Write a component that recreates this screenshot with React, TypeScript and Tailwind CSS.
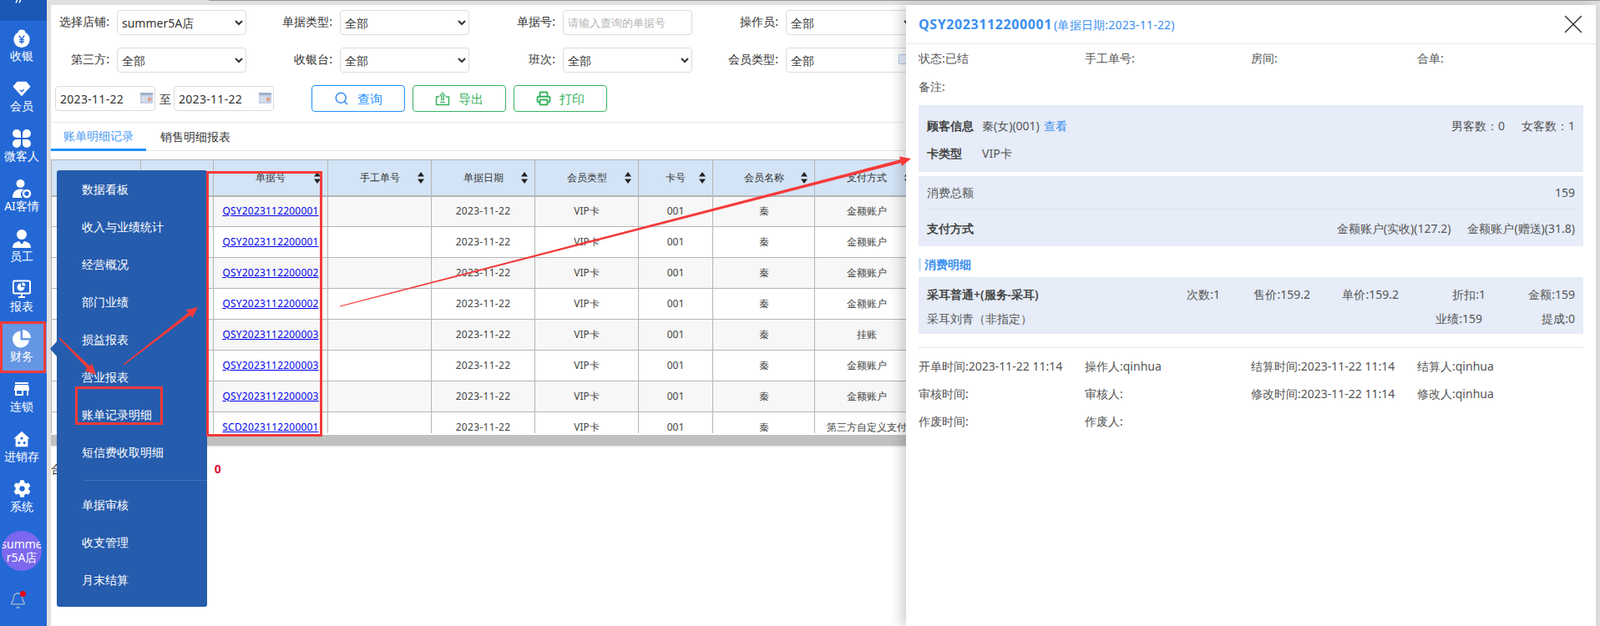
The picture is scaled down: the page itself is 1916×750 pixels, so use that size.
import React from "react";
import { Bell, Printer, Search, X } from "lucide-react";
import { FaCog } from "react-icons/fa";
import { MdStore } from "react-icons/md";

// --- icons ---
const CashIcon = () => (
  <svg viewBox="0 0 24 24" className="h-[22px] w-[22px]">
    <ellipse cx="12" cy="3.5" rx="4.5" ry="3" fill="#fff" />
    <circle cx="12" cy="13.5" r="10.5" fill="#fff" />
    <path d="M8.5 8.5 12 13l3.5-4.5M12 13v6M8.8 13.8h6.4M8.8 16.3h6.4" stroke="#2468d6" strokeWidth="1.5" fill="none" />
  </svg>
);
const MemberIcon = () => (
  <svg viewBox="0 0 24 24" className="h-[22px] w-[22px]">
    <path d="M6 3h12l5.5 6.5L12 22 .5 9.5z" fill="#fff" />
    <path d="m10 14 2 2 3-3" stroke="#2468d6" strokeWidth="1.5" fill="none" />
  </svg>
);
const CloverIcon = () => (
  <svg viewBox="0 0 24 24" className="h-[24px] w-[24px]" fill="#fff">
    <path d="M11 11H6a5 5 0 1 1 5-5z" />
    <path d="M13 11h5a5 5 0 1 0-5-5z" />
    <path d="M11 13H6a5 5 0 1 0 5 5z" />
    <path d="M13 13h5a5 5 0 1 1-5 5z" />
  </svg>
);
const AiIcon = () => (
  <svg viewBox="0 0 24 24" className="h-[24px] w-[24px]" fill="#fff">
    <circle cx="10.5" cy="6" r="5" />
    <path d="M1 23c0-7 4-10.500 9.500-10.500 2 0 3 .5 4 1-2 1-3.500 3-3.500 5s1 3.500 2 4.500z" />
    <circle cx="18" cy="18" r="4" fill="none" stroke="#fff" strokeWidth="2.500" />
  </svg>
);
const StaffIcon = () => (
  <svg viewBox="0 0 24 24" className="h-[24px] w-[24px]" fill="#fff">
    <circle cx="12" cy="7" r="6" />
    <path d="M1 23c0-5 3-7 8-8l3 4 3-4c5 1 8 3 8 8z" />
  </svg>
);
const ReportIcon = () => (
  <svg viewBox="0 0 24 24" className="h-[24px] w-[24px]">
    <rect x="2" y="2.500" width="20" height="15" rx="1.500" fill="none" stroke="#fff" strokeWidth="2" />
    <path d="M11 5.500a4.500 4.500 0 1 0 4.500 4.500H11z" fill="#fff" />
    <path d="M12.500 4.500a4 4 0 0 1 4 4h-4z" fill="#fff" />
    <path d="M8 22h8M12 18v4" stroke="#fff" strokeWidth="2" />
  </svg>
);
const PieIcon = () => (
  <svg viewBox="0 0 24 24" className="h-[24px] w-[24px]" fill="#fff">
    <path d="M10.500 2.500a10 10 0 1 0 10.500 11H10.500z" />
    <path d="M13 1a10 10 0 0 1 10 10H13z" />
  </svg>
);
const StockIcon = () => (
  <svg viewBox="0 0 24 24" className="h-[22px] w-[22px]">
    <path d="M12 2 1.500 11.500H4V22h16V11.500h2.500z" fill="#fff" />
    <circle cx="12" cy="11" r="1.700" fill="#2468d6" />
    <circle cx="8.500" cy="17" r="1.700" fill="#2468d6" />
    <circle cx="15.500" cy="17" r="1.700" fill="#2468d6" />
  </svg>
);
const ExportIcon = () => (
  <svg viewBox="0 0 18 18" className="h-[18px] w-[18px]" fill="none">
    <path d="M5 7H1.500v9.500h15V7H13" stroke="#36b35e" strokeWidth="1.500" />
    <path d="M9 1.500 5.500 6H7.500v5h3V6h2z" fill="#a8d8b8" stroke="#36b35e" strokeWidth="0.800" />
    <path d="M6 13.500h6" stroke="#36b35e" strokeWidth="1.200" />
  </svg>
);
const CalendarIcon = () => (
  <svg viewBox="0 0 15 13" className="h-[13px] w-[15px]">
    <rect width="15" height="13" rx="1" fill="#c3cfe2" />
    <rect width="15" height="3" fill="#9fb0cc" />
    <rect x="9" y="6" width="4" height="4" fill="#e8a28c" />
    <path d="M1 6h7M1 9h7M4 4v8M8 4v8" stroke="#eef2f8" strokeWidth="0.800" />
  </svg>
);
const SortIcon = () => (
  <svg viewBox="0 0 8 14" className="absolute right-[8px] top-[14px] h-[14px] w-[8px]" fill="#222">
    <path d="M4 0 8 5.500H0zM4 14 0 8.500h8z" />
  </svg>
);

// tapered annotation arrow, thin at the start
const Arrow = ({ x1, y1, x2, y2 }: { x1: number; y1: number; x2: number; y2: number }) => {
  const len = Math.hypot(x2 - x1, y2 - y1);
  const ux = (x2 - x1) / len;
  const uy = (y2 - y1) / len;
  const nx = -uy;
  const ny = ux;
  const bx = x2 - ux * 13;
  const by = y2 - uy * 13;
  const pts = [
    [x1 + nx * 0.6, y1 + ny * 0.6],
    [bx + nx * 2, by + ny * 2],
    [bx + nx * 6, by + ny * 6],
    [x2, y2],
    [bx - nx * 6, by - ny * 6],
    [bx - nx * 2, by - ny * 2],
    [x1 - nx * 0.6, y1 - ny * 0.6],
  ];
  return <polygon points={pts.map((p) => p.join(",")).join(" ")} fill="#f53a3a" />;
};

// --- data ---
const navItems = [
  { label: "收银", icon: <CashIcon /> },
  { label: "会员", icon: <MemberIcon /> },
  { label: "微客人", icon: <CloverIcon /> },
  { label: "AI客情", icon: <AiIcon /> },
  { label: "员工", icon: <StaffIcon /> },
  { label: "报表", icon: <ReportIcon /> },
  { label: "财务", icon: <PieIcon />, active: true },
  { label: "连锁", icon: <MdStore size={24} color="#fff" /> },
  { label: "进销存", icon: <StockIcon /> },
  { label: "系统", icon: <FaCog size={21} color="#fff" /> },
];

const menuTop = ["数据看板", "收入与业绩统计", "经营概况", "部门业绩", "损益报表", "营业报表", "账单记录明细", "短信费收取明细"];
const menuBottom = ["单据审核", "收支管理", "月末结算"];

const filters = [
  { label: "选择店铺:", value: "summer5A店" },
  { label: "单据类型:", value: "全部" },
  { label: "单据号:", placeholder: "请输入查询的单据号" },
  { label: "操作员:", value: "全部" },
  { label: "第三方:", value: "全部" },
  { label: "收银台:", value: "全部" },
  { label: "班次:", value: "全部" },
  { label: "会员类型:", value: "全部" },
];

const columns = [
  { title: "", width: "w-[107px]" },
  { title: "", width: "w-[87px]" },
  { title: "单据号", width: "w-[137px]" },
  { title: "手工单号", width: "w-[124px]" },
  { title: "单据日期", width: "w-[124px]" },
  { title: "会员类型", width: "w-[124px]" },
  { title: "卡号", width: "w-[89px]" },
  { title: "会员名称", width: "w-[122px]" },
  { title: "支付方式", width: "w-[124px]" },
];

const rows = [
  { no: "QSY2023112200001", pay: "金额账户" },
  { no: "QSY2023112200001", pay: "金额账户" },
  { no: "QSY2023112200002", pay: "金额账户" },
  { no: "QSY2023112200002", pay: "金额账户" },
  { no: "QSY2023112200003", pay: "挂账" },
  { no: "QSY2023112200003", pay: "金额账户" },
  { no: "QSY2023112200003", pay: "金额账户" },
  { no: "SCD2023112200001", pay: "第三方自定义支付" },
];

const infoRows = [
  ["开单时间:2023-11-22 11:14", "操作人:qinhua", "结算时间:2023-11-22 11:14", "结算人:qinhua"],
  ["审核时间:", "审核人:", "修改时间:2023-11-22 11:14", "修改人:qinhua"],
  ["作废时间:", "作废人:", "", ""],
];

const DateInput = () => (
  <div className="relative w-[120px]">
    <input
      readOnly
      value="2023-11-22"
      className="h-[30px] w-full rounded-[4px] border border-[#dcdcdc] pl-[5px] text-[14px] tracking-[0.3px] text-[#333]"
    />
    <div className="absolute right-[3px] top-[8px]">
      <CalendarIcon />
    </div>
  </div>
);

const Sidebar = () => (
  <aside className="flex h-full w-[56px] shrink-0 flex-col items-stretch bg-[#2468d6] text-white">
    <div className="mb-[2px] h-[25px] bg-[#1b57b5] pl-[18px]">
      <svg viewBox="0 0 8 4" className="h-[4px] w-[8px]" fill="none" stroke="#fff" strokeWidth="1.500">
        <path d="M3-1 1 3.500M7-1 5 3.500" />
      </svg>
    </div>
    {navItems.map((item) => (
      <div
        key={item.label}
        className={`flex h-[60px] flex-col items-center pr-[4px] pt-[6px] text-[14px] ${item.active ? "bg-[#6496e4]" : ""}`}
      >
        <div className="flex h-[25px] items-center justify-center">{item.icon}</div>
        <span className="mt-[-1px] leading-[20px] whitespace-nowrap">{item.label}</span>
      </div>
    ))}
    <div className="ml-[2px] mt-[9px] flex h-[48px] w-[48px] items-center justify-center overflow-hidden rounded-full bg-[#7b68ee] text-center text-[14px] leading-[16px]">
      <span>
        summe
        <br />
        r5A店
      </span>
    </div>
    <div className="relative ml-[11px] mt-[25px] h-[22px] w-[22px]">
      <Bell size={21} color="#a9b9d0" strokeWidth={1.5} />
      <span className="absolute left-[13px] top-[-1px] h-[7px] w-[7px] rounded-full bg-[#e60012]" />
    </div>
  </aside>
);

const FilterForm = () => (
  <div className="border-b border-[#e6e6e6] pb-[12px] pt-[6px]">
    <div className="grid grid-cols-[repeat(4,267px)] gap-y-[15px]">
      {filters.map((f) => (
        <div key={f.label} className="flex items-center gap-[9px]">
          <label className="mb-[4px] w-[70px] text-right text-[14px] whitespace-nowrap text-[#333]">{f.label}</label>
          {f.placeholder ? (
            <input
              placeholder={f.placeholder}
              className="h-[30px] w-[155px] rounded-[4px] border border-[#dcdcdc] px-[5px] text-[13px] placeholder:text-[#b5b5b5]"
            />
          ) : (
            <select
              defaultValue={f.value}
              className="h-[30px] w-[155px] shrink-0 rounded-[4px] border border-[#dcdcdc] bg-white pl-[1px] text-[14px] text-[#333]"
            >
              <option>{f.value}</option>
            </select>
          )}
        </div>
      ))}
    </div>
    <div className="mt-[15px] flex items-center pl-[5px]">
      <DateInput />
      <span className="ml-[5px] mr-[3px] text-[14px] text-[#333]">至</span>
      <DateInput />
      <div className="ml-[45px] flex gap-[9px]">
        <button className="flex h-[32px] w-[112px] items-center justify-center gap-[10px] rounded-[4px] border border-[#1e90ff] text-[15px] text-[#1e90ff]">
          <Search size={18} color="#3a8ff0" />
          查询
        </button>
        <button className="flex h-[32px] w-[112px] items-center justify-center gap-[10px] rounded-[4px] border border-[#36b35e] text-[15px] text-[#36b35e]">
          <ExportIcon />
          导出
        </button>
        <button className="flex h-[32px] w-[112px] items-center justify-center gap-[10px] rounded-[4px] border border-[#36b35e] text-[15px] text-[#36b35e]">
          <Printer size={18} color="#36b35e" strokeWidth={2.500} />
          打印
        </button>
      </div>
    </div>
  </div>
);

const BillTable = () => (
  <div className="mt-[10px] h-[328px] overflow-hidden">
    <table className="w-[1038px] table-fixed border-collapse text-center text-[12px] text-[#444]">
      <thead>
        <tr className="h-[43px] border-b-2 border-[#b5b5b5] bg-[#d3e4f6]">
          {columns.map((c, i) => (
            <th key={i} className={`relative border border-[#b5b5b5] font-medium text-[#333] ${c.width}`}>
              {c.title}
              <SortIcon />
            </th>
          ))}
        </tr>
      </thead>
      <tbody>
        {rows.map((r, i) => (
          <tr key={i} className={`h-[37px] ${i % 2 === 0 ? "bg-[#f7f7f7]" : "bg-white"}`}>
            <td className="border border-[#b5b5b5]" />
            <td className="border border-[#b5b5b5]" />
            <td className="border border-[#b5b5b5]">
              <a className="text-[#0000ee] underline tracking-[0.2px]">{r.no}</a>
            </td>
            <td className="border border-[#b5b5b5]" />
            <td className="border border-[#b5b5b5] tracking-[0.3px]">2023-11-22</td>
            <td className="border border-[#b5b5b5]">VIP卡</td>
            <td className="border border-[#b5b5b5]">001</td>
            <td className="border border-[#b5b5b5]">秦</td>
            <td className="border border-[#b5b5b5] whitespace-nowrap">{r.pay}</td>
          </tr>
        ))}
      </tbody>
    </table>
  </div>
);

const FinanceMenu = () => (
  <div className="absolute left-[68px] top-[204px] z-20 w-[180px] rounded-[3px] bg-[#265cad] pb-[10px] text-[14px] text-white">
    <div className="absolute left-[-8px] top-[205px] h-0 w-0 border-y-[9px] border-r-[8px] border-y-transparent border-r-[#265cad]" />
    {menuTop.map((m) => (
      <div key={m} className="flex h-[45px] items-center pl-[30px]">
        {m}
      </div>
    ))}
    <div className="mb-[6px] ml-[31px] mt-[11px] h-px bg-[#3f72bf]" />
    {menuBottom.map((m) => (
      <div key={m} className="flex h-[45px] items-center pl-[30px]">
        {m}
      </div>
    ))}
  </div>
);

const DetailPanel = () => (
  <section className="z-10 h-full w-[826px] shrink-0 bg-white text-[14px] text-[#555] shadow-[-6px_0_14px_rgba(0,0,0,0.18)]">
    <header className="flex h-[47px] items-center justify-between border-b border-[#e3e3e3] pl-[15px] pr-[8px]">
      <div className="flex items-baseline text-[#3a8ff0]">
        <span className="text-[16px] font-bold tracking-[0.6px]">QSY2023112200001</span>
        <span className="ml-[2px] tracking-[0.2px]">(单据日期:2023-11-22)</span>
      </div>
      <X size={38} color="#333" strokeWidth={0.9} />
    </header>
    <div className="px-[15px]">
      <div className="grid grid-cols-[repeat(4,199px)] leading-[34px]">
        <div>状态:已结</div>
        <div>手工单号:</div>
        <div>房间:</div>
        <div>合单:</div>
        <div>备注:</div>
      </div>
      <div className="mt-[5px] h-[80px] bg-[#e6ecf8] px-[10px] pt-[8px] leading-[33px]">
        <div className="flex justify-between">
          <div>
            <b className="mr-[10px] font-semibold text-[#444]">顾客信息</b>
            秦(女)(001) <span className="ml-[2px] text-[#3a8ff0]">查看</span>
          </div>
          <div className="flex gap-[20px]">
            <span>男客数：0</span>
            <span>女客数：1</span>
          </div>
        </div>
        <div className="flex">
          <b className="w-[66px] font-semibold text-[#444]">卡类型</b>
          VIP卡
        </div>
      </div>
      <div className="mt-[5px] h-[84px] bg-[#e6ecf8] px-[10px]">
        <div className="flex h-[40px] items-center justify-between border-b border-[#dcdfe6]">
          <span>消费总额</span>
          <span>159</span>
        </div>
        <div className="flex h-[44px] items-center justify-between">
          <b className="font-semibold text-[#444]">支付方式</b>
          <div className="flex gap-[20px]">
            <span>金额账户(实收)(127.2)</span>
            <span>金额账户(赠送)(31.8)</span>
          </div>
        </div>
      </div>
      <h3 className="mt-[14px] border-l-[3px] border-[#cfe2f8] pl-[4px] text-[14px] leading-[16px] font-semibold text-[#3a8ff0]">
        消费明细
      </h3>
      <div className="mt-[7px] h-[68px] bg-[#e6ecf8] px-[10px] pt-[6px] leading-[29px]">
        <div className="grid grid-cols-[1fr_108px_108px_106px_104px_107px] text-right">
          <b className="text-left font-semibold text-[#444]">采耳普通+(服务-采耳)</b>
          <span>次数:1</span>
          <span>售价:159.2</span>
          <span>单价:159.2</span>
          <span>折扣:1</span>
          <span>金额:159</span>
        </div>
        <div className="flex">
          <span className="flex-1">采耳刘青（非指定）</span>
          <span>业绩:159</span>
          <span className="w-[111px] text-right">提成:0</span>
        </div>
      </div>
      <hr className="mt-[16px] border-[#e3e3e3]" />
      <div className="mt-[5px] grid grid-cols-[repeat(4,199px)] leading-[33px]">
        {infoRows.flat().map((t, i) => (
          <div key={i} className="whitespace-nowrap">
            {t}
          </div>
        ))}
      </div>
    </div>
  </section>
);

export default function App() {
  return (
    <div className="relative flex h-[750px] w-[1916px] overflow-hidden bg-[#e0e0e0] font-['Open_Sans','Noto_Sans_CJK_SC',sans-serif]">
      {/* dark hairline along the top edge */}
      <div className="absolute left-[250px] right-0 top-0 h-px bg-[#999999]" />

      <Sidebar />

      {/* content column */}
      <div className="ml-[5px] mt-[6px] flex min-w-0 flex-1">
        <main className="relative h-full w-[1024px] shrink-0 overflow-hidden bg-white">
          <FilterForm />
          {/* little icon sitting on the member type select */}
          <div className="absolute left-[1015px] top-[59px] h-[12px] w-[12px] rounded-[1px] border border-[#a9c8f0] bg-[#e8f0fb]" />
          {/* tabs */}
          <div className="flex h-[34px] gap-[2px] border-b border-[#e6e6e6] text-[14px]">
            <div className="flex h-[34px] w-[114px] items-center justify-center border-b-[3px] border-[#1e90ff] text-[#4a9bf5]">
              账单明细记录
            </div>
            <div className="flex h-[33px] w-[114px] items-center justify-center text-[#333]">销售明细报表</div>
          </div>
          <BillTable />
          {/* horizontal scrollbar */}
          <div className="mt-[2px] h-[13px] bg-[#c0c0c0]" />
          <div className="h-[2px] bg-[#eeeeee]" />
          <div className="mt-[15px] flex items-center text-[14px] text-[#333]">
            <span>合计:</span>
            <b className="ml-[164px] text-[#dc143c]">0</b>
          </div>
        </main>
        <DetailPanel />
      </div>

      <FinanceMenu />

      {/* red annotations from the screenshot */}
      <div className="pointer-events-none absolute left-0 top-[385px] z-30 h-[62px] w-[55px] border-[3px] border-[#f53a3a]" />
      <div className="pointer-events-none absolute left-[90px] top-[463px] z-30 h-[46px] w-[105px] border-[3px] border-[#f53a3a]" />
      <div className="pointer-events-none absolute left-[247px] top-[205px] z-30 h-[318px] w-[139px] border-[3px] border-[#f53a3a]" />
      <svg className="pointer-events-none absolute left-0 top-0 z-30 h-[750px] w-[1916px]">
        <Arrow x1={71} y1={405} x2={115} y2={449} />
        <Arrow x1={148} y1={437} x2={237} y2={368} />
        <Arrow x1={407} y1={367} x2={1091} y2={190} />
      </svg>
    </div>
  );
}
